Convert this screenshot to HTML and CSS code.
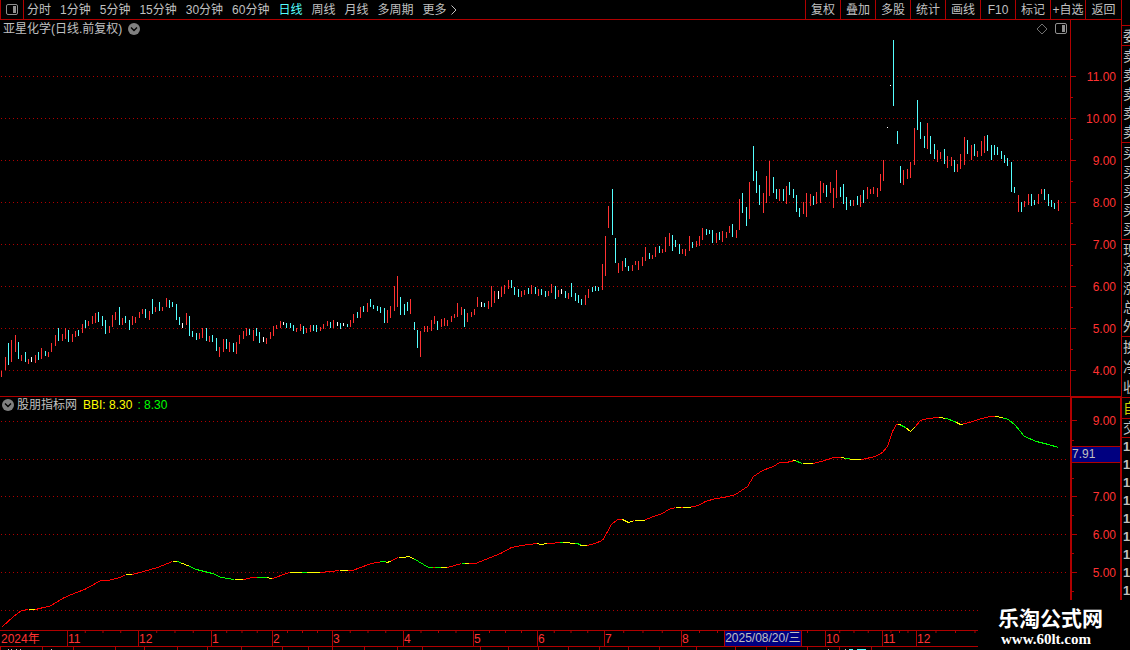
FILE: index.html
```html
<!DOCTYPE html>
<html lang="zh-CN">
<head>
<meta charset="utf-8">
<title>亚星化学 日线</title>
<link rel="stylesheet" href="styles.css">
</head>
<body>
<div class="app">
  <main class="main">
    <header class="toolbar">
      <button class="layout-btn" aria-label="布局">
        <svg width="12" height="12" viewBox="0 0 12 12"><rect x=".5" y=".5" width="11" height="10" rx="1.5" fill="none" stroke="#909090"/><rect x="7" y="2" width="3" height="7" fill="#909090"/></svg>
      </button>
      <nav class="periods">
        <button>分时</button><button>1分钟</button><button>5分钟</button><button>15分钟</button><button>30分钟</button><button>60分钟</button><button class="active">日线</button><button>周线</button><button>月线</button><button>多周期</button>
        <button class="more">更多<svg width="6" height="10" viewBox="0 0 6 10"><path d="M.5.5 5 5 .5 9.5" fill="none" stroke="#c0c0c0"/></svg></button>
      </nav>
      <div class="tools">
        <button>复权</button><button>叠加</button><button>多股</button><button>统计</button><button>画线</button><button>F10</button><button>标记</button><button>+自选</button><button>返回</button>
      </div>
    </header>

    <section class="panel price">
      <div class="plot">
        <div class="title">
          <span>亚星化学(日线.前复权)</span>
          <svg width="12" height="12" viewBox="0 0 12 12"><circle cx="6" cy="6" r="6" fill="#808080"/><path d="M3 4.5 6 7.5 9 4.5" fill="none" stroke="#000" stroke-width="1.4"/></svg>
          <span class="title-tools">
            <svg width="12" height="12" viewBox="0 0 12 12"><path d="M6 1 11 6 6 11 1 6Z" fill="none" stroke="#707070"/></svg>
            <svg width="12" height="12" viewBox="0 0 12 12"><rect x=".5" y=".5" width="11" height="10" rx="1.5" fill="none" stroke="#909090"/><rect x="7" y="2" width="3" height="7" fill="#909090"/></svg>
          </span>
        </div>
        <svg id="candles" class="chart chart-price" viewBox="0 38 1070 358" preserveAspectRatio="none"></svg>
      </div>
      <div class="axis axis-price">
        <span>11.00</span><span>10.00</span><span>9.00</span><span>8.00</span><span>7.00</span><span>6.00</span><span>5.00</span><span>4.00</span>
      </div>
    </section>

    <section class="panel bbi">
      <div class="plot">
        <div class="title title-bbi">
          <svg width="12" height="12" viewBox="0 0 12 12"><circle cx="6" cy="6" r="6" fill="#808080"/><path d="M3 4.5 6 7.5 9 4.5" fill="none" stroke="#000" stroke-width="1.4"/></svg>
          <span>股朋指标网</span><span class="yellow">BBI: 8.30</span><span class="green">: 8.30</span>
        </div>
        <svg id="bbi" class="chart chart-bbi" viewBox="0 413 1070 217" preserveAspectRatio="none"></svg>
      </div>
      <div class="axis axis-bbi">
        <span>9.00</span><span>8.00</span><span>7.00</span><span>6.00</span><span>5.00</span><span></span>
        <output class="cursor-value">7.91</output>
      </div>
    </section>

    <div class="timeline">
      <span class="first" style="flex-grow:67">2024年</span><span style="flex-grow:71">11</span><span style="flex-grow:73">12</span><span style="flex-grow:61">1</span><span style="flex-grow:60">2</span><span style="flex-grow:71">3</span><span style="flex-grow:70">4</span><span style="flex-grow:64">5</span><span style="flex-grow:67">6</span><span style="flex-grow:77">7</span><span style="flex-grow:72">8</span><span style="flex-grow:72"></span><span style="flex-grow:57">10</span><span style="flex-grow:34">11</span><span style="flex-grow:78">12</span><span class="first" style="flex-grow:127"></span>
      <time class="cursor-date" datetime="2025-08-20">2025/08/20/三</time>
    </div>
    <svg id="tabs" class="tabs" viewBox="0 647 1121 3" preserveAspectRatio="none"></svg>
  </main>

  <aside class="quote">
    <div class="group g-ratio"><span>委比</span></div>
    <div class="group g-five"><span>卖五</span><span>卖四</span><span>卖三</span><span>卖二</span><span>卖一</span></div>
    <div class="group g-five"><span>买一</span><span>买二</span><span>买三</span><span>买四</span><span>买五</span></div>
    <div class="group g-five"><span>现价</span><span>涨跌</span><span>涨幅</span><span>总量</span><span>外盘</span></div>
    <div class="group g-three"><span>换手</span><span>净资</span><span>收益</span></div>
    <div class="group g-self"><span>自选</span></div>
    <div class="group g-trade"><span>交易</span></div>
    <div class="group g-ticks"><b>1</b><b>1</b><b>1</b><b>1</b><b>1</b><b>1</b><b>1</b><b>1</b><b>1</b></div>
  </aside>

  <div class="brand"><strong>乐淘公式网</strong><span>www.60lt.com</span></div>
</div>
<script src="chart.js"></script>
</body>
</html>
```

FILE: styles.css
```css
* { box-sizing: border-box; }

:root {
  --frame: #b00000;
  --red: #ff3232;
  --text: #c0c0c0;
}

body {
  margin: 0;
  background: #000;
  color: var(--text);
  font: 12px/16px "Liberation Sans", "Noto Sans CJK SC", sans-serif;
}

button {
  margin: 0;
  padding: 0;
  border: 0;
  background: none;
  color: inherit;
  font: inherit;
  white-space: nowrap;
}

svg { display: block; flex: none; }

.app {
  position: relative;
  display: grid;
  grid-template-columns: minmax(0, 1fr) 9px;
  overflow: hidden;
}

.main { display: flex; flex-direction: column; min-width: 0; }

/* toolbar */
.toolbar {
  display: flex;
  height: 20px;
  border-bottom: 1px solid var(--frame);
  border-left: 1px solid var(--frame);
}
.layout-btn {
  display: flex;
  align-items: center;
  justify-content: center;
  width: 23px;
  border-right: 1px solid var(--frame);
}
.periods { display: flex; gap: 9px; padding-left: 3px; }
.periods .active { color: #54ffff; }
.more { display: flex; align-items: center; gap: 4px; }
.tools { display: flex; margin-left: auto; }
.tools button { width: 35px; border-left: 1px solid var(--frame); }
.tools button:last-child { width: 36px; }

/* chart panels */
.panel { display: grid; grid-template-columns: minmax(0, 1fr) 51px; }
.bbi { border-top: 1px solid var(--frame); }
.plot { min-width: 0; }
.title {
  display: flex;
  align-items: center;
  gap: 6px;
  height: 18px;
  padding: 0 3px;
}
.title-tools { display: flex; gap: 7px; margin-left: auto; }
.title-bbi { height: 16px; padding-left: 2px; gap: 3px; }
.yellow { margin-left: 3px; color: #ff0; }
.green { margin-left: 2px; color: #0f0; }
.chart { width: 100%; shape-rendering: crispEdges; }
.chart-price { height: 358px; }
.chart-bbi { height: 217px; }

.axis {
  display: flex;
  flex-direction: column;
  color: var(--red);
  text-align: right;
}
.axis span {
  display: flex;
  align-items: center;
  justify-content: flex-end;
  padding: 1px 5px 0 0;
  background:
    linear-gradient(var(--frame), var(--frame)) 0 50% / 5px 1px no-repeat,
    linear-gradient(var(--frame), var(--frame)) 0 0 / 2px 1px no-repeat;
}
.axis span:first-child {
  background: linear-gradient(var(--frame), var(--frame)) 0 50% / 5px 1px no-repeat;
}
.axis-price { border-left: 1px solid var(--frame); padding-top: 35px; }
.axis-price span { height: 42px; }
.axis-bbi {
  position: relative;
  padding: 4px 0 1px;
  border: solid var(--frame);
  border-width: 1px 1px 0 2px;
}
.axis-bbi span { flex: 1; padding-right: 4px; }
.cursor-value {
  position: absolute;
  top: 48px;
  left: 0;
  right: 0;
  height: 17px;
  border: solid var(--frame);
  border-width: 1px 0;
  background: #000080;
  color: var(--text);
  line-height: 15px;
  text-align: left;
}

/* time axis */
.timeline {
  position: relative;
  display: flex;
  height: 17px;
  border: solid var(--frame);
  border-width: 1px 0;
  color: var(--red);
}
.timeline span {
  flex: 1 1 0;
  min-width: 0;
  text-indent: 1px;
  white-space: nowrap;
  background:
    linear-gradient(var(--frame), var(--frame)) 0 0 / 1px 100% no-repeat,
    linear-gradient(90deg, var(--frame) 1px, transparent 1px) 0 0 / 25% 2px repeat-x;
}
.timeline .first { background: none; }
.cursor-date {
  position: absolute;
  top: 0;
  left: 64.6%;
  border: solid var(--frame);
  border-width: 0 1px;
  background: #000080;
  color: var(--text);
  line-height: 15px;
}
.tabs { width: 100%; height: 3px; shape-rendering: crispEdges; }

/* quote column, mostly beyond the window edge */
.quote {
  padding-top: 25px;
  border-left: 1px solid var(--frame);
  overflow: hidden;
}
.group {
  display: flex;
  flex-direction: column;
  justify-content: space-around;
  padding-left: 1px;
  border-top: 1px solid var(--frame);
  font-size: 14px;
  white-space: nowrap;
}
.g-ratio { height: 20px; }
.g-five { height: 97px; }
.g-three { height: 61px; }
.g-self { height: 21px; color: #d0d000; }
.g-trade { height: 19px; }
.g-ticks { height: 163px; font-size: 13px; }

.brand {
  position: absolute;
  right: 0;
  bottom: 0;
  display: flex;
  flex-direction: column;
  align-items: flex-start;
  width: 152px;
  height: 50px;
  padding: 7px 0 0 20px;
  background: #000;
  color: #fff;
}
.brand strong { font-size: 21px; line-height: 24px; }
.brand span {
  padding-left: 3px;
  font: bold 15px/16px "Liberation Serif", serif;
}
```

FILE: chart.js
```js
const NS = "http://www.w3.org/2000/svg";
const FRAME = "#b00000";

function add(parent, name, attrs) {
  const el = document.createElementNS(NS, name);
  for (const key in attrs) el.setAttribute(key, attrs[key]);
  parent.appendChild(el);
}

function grid(svg, rows) {
  for (const y of rows) {
    add(svg, "path", { d: `M1 ${y + 0.5}H1067`, stroke: FRAME, "stroke-dasharray": "1 3" });
  }
}

/* x, high, low, direction: r up, c down, w flat */
const BARS = `1 371 377 r,5 357 370 r,8 343 365 c,11 340 362 r,15 335 352 r,18 342 359 c,21 355 361 r,25 352 362 c,28 359 364 r,31 357 362 w,
35 355 363 r,38 352 360 c,41 348 359 r,45 351 356 c,48 352 357 r,51 343 352 r,55 335 346 r,58 328 341 c,62 334 341 r,65 328 339 r,
68 330 342 c,72 334 342 r,75 331 337 r,78 330 336 c,82 324 333 r,85 320 328 c,88 321 326 r,92 316 324 r,95 313 323 r,98 312 322 c,
102 316 326 c,105 320 334 c,109 326 333 r,112 315 327 r,115 312 320 r,119 307 325 c,122 318 325 r,125 316 323 c,129 320 330 c,132 316 325 r,
135 317 323 r,139 312 318 r,142 309 314 r,145 309 318 c,149 311 320 r,152 299 314 c,155 307 312 r,159 302 311 c,162 307 311 r,166 298 307 r,
169 300 308 c,172 302 307 c,176 304 320 c,179 317 325 c,182 323 328 w,186 313 325 r,189 316 336 c,192 331 337 c,196 333 340 c,199 333 339 r,
202 328 338 r,206 328 341 c,209 336 342 r,212 335 342 c,216 338 351 c,219 347 357 r,223 339 352 r,226 339 349 c,229 342 352 r,233 343 352 c,
236 342 354 r,239 335 344 r,243 331 339 r,246 328 336 r,249 329 335 c,253 330 341 r,256 328 336 c,259 332 343 c,263 337 342 w,266 338 344 r,
270 332 339 r,273 326 336 r,276 325 329 r,280 321 328 r,283 322 325 w,286 323 328 c,290 323 328 c,293 325 331 c,296 328 332 r,300 324 331 r,
303 326 334 c,306 328 333 r,310 325 332 r,313 325 331 c,316 325 332 c,320 327 331 r,323 324 329 r,327 321 326 r,330 322 328 c,333 320 328 r,
337 322 326 w,340 323 329 c,343 323 326 w,347 324 327 c,350 320 327 r,353 314 323 r,357 312 318 c,360 307 318 r,363 306 312 c,367 303 312 r,
370 299 307 c,373 305 309 c,377 306 311 c,380 307 313 c,384 308 323 c,387 310 323 r,390 306 318 r,394 286 311 r,397 276 307 r,400 297 315 c,
404 304 315 c,407 302 311 c,410 299 314 r,414 322 330 c,417 330 348 c,420 331 357 r,424 326 332 r,427 326 332 r,431 320 331 r,434 316 324 r,
437 321 330 c,441 319 327 r,444 318 326 r,447 320 326 r,451 316 322 r,454 314 318 r,457 303 317 r,461 307 315 r,464 309 327 c,467 313 322 r,
471 312 317 r,474 309 315 r,477 297 307 r,481 302 307 w,484 303 307 c,488 301 309 r,491 286 307 r,494 291 303 r,498 291 299 w,501 287 297 r,
504 285 294 r,508 280 289 r,511 280 288 c,514 287 295 c,518 289 297 c,521 291 297 r,524 290 295 r,528 288 294 c,531 285 294 r,535 287 294 c,
538 289 296 r,541 289 295 c,545 291 297 c,548 291 296 r,551 284 293 r,555 286 299 c,558 290 297 r,561 289 294 w,565 291 298 c,568 293 299 r,
571 283 297 c,575 293 301 c,578 295 303 c,581 299 305 c,585 295 305 r,588 289 298 r,592 287 292 c,595 286 291 c,598 287 291 c,602 264 290 r,
605 236 276 r,608 206 228 r,612 189 235 c,615 238 263 c,618 263 273 r,622 261 271 r,625 258 267 c,628 266 271 c,632 265 271 r,635 261 265 r,
638 261 270 r,642 257 266 r,645 247 261 r,649 253 259 c,652 255 259 r,655 247 257 r,659 246 253 c,662 249 253 r,665 237 252 r,669 233 246 r,
672 235 251 c,675 240 247 c,679 244 254 c,682 249 254 r,685 249 256 r,689 236 251 r,692 242 248 c,696 241 247 r,699 236 246 r,702 228 240 r,
706 229 235 c,709 230 234 c,712 230 243 c,716 233 243 r,719 232 240 c,722 231 242 r,726 232 238 r,729 226 233 r,732 224 237 c,736 230 238 r,
739 199 230 r,742 193 213 c,746 207 226 c,749 182 219 r,753 146 181 c,756 171 193 c,759 185 205 c,763 193 213 r,766 176 203 r,769 161 196 r,
773 177 193 c,776 189 199 c,779 189 201 r,783 189 201 c,786 186 204 r,789 182 195 c,793 189 198 c,796 195 212 c,799 208 217 c,803 202 214 r,
806 193 217 r,810 194 206 r,813 196 205 c,816 192 204 r,820 181 203 r,823 183 193 r,826 185 197 c,830 182 193 r,833 188 208 r,836 170 198 r,
840 187 197 c,843 184 204 c,846 197 210 c,850 200 206 c,853 200 206 r,857 196 205 c,860 195 207 r,863 190 203 c,867 187 199 r,870 189 194 r,
873 187 194 r,877 188 197 r,880 174 191 r,883 160 181 r,887 127 128 w,890 85 86 w,893 40 106 c,897 131 144 c,900 166 183 c,903 170 185 r,
907 169 179 r,910 162 178 r,914 128 165 r,917 100 130 c,920 122 139 c,924 136 148 c,927 123 149 r,930 136 154 c,934 144 159 c,937 150 162 r,
940 152 159 r,944 149 164 c,947 156 168 r,951 157 166 r,954 160 172 c,957 164 172 r,960 154 169 r,964 137 165 r,967 140 154 c,971 145 160 r,
974 144 156 c,977 151 157 r,981 141 156 r,984 136 153 r,987 135 151 c,991 145 160 c,994 145 155 c,997 147 155 c,1001 151 159 c,1004 155 163 c,
1007 158 166 c,1011 162 192 c,1014 187 193 c,1018 195 212 r,1021 202 212 c,1024 201 207 r,1028 194 205 r,1031 194 206 c,1034 200 205 c,
1038 194 204 r,1041 189 194 r,1044 189 200 c,1048 194 206 c,1051 200 207 c,1054 203 209 c,1058 200 211 r`;

const BAR_COLORS = { r: "#ff3232", c: "#54ffff", w: "#ffffff" };
const candles = document.getElementById("candles");
grid(candles, [76, 118, 160, 202, 244, 286, 328, 370]);
for (const bar of BARS.split(",")) {
  const [x, top, bottom, kind] = bar.trim().split(" ");
  add(candles, "rect", { x, y: top, width: 1, height: bottom - top, fill: BAR_COLORS[kind] });
}

/* BBI curve */
const CURVE = [[2,626],[13,616],[21,610],[28,609],[35,609],[43,607],[49,606],[62,598],[71,594],[84,589],[95,583],[100,580],[107,580],[120,577],
[125,574],[132,574],[143,571],[157,567],[172,561],[177,561],[187,565],[196,569],[212,573],[221,577],[234,579],[243,579],[252,577],[264,577],
[272,578],[289,572],[320,572],[339,570],[352,570],[368,564],[375,562],[384,561],[387,562],[398,557],[403,557],[408,556],[413,558],[428,567],
[447,567],[461,563],[475,563],[500,553],[511,547],[521,545],[537,543],[540,544],[547,543],[562,542],[577,543],[581,545],[587,545],[594,543],
[602,540],[606,533],[611,524],[617,519],[622,519],[628,522],[634,520],[643,520],[653,516],[662,513],[668,509],[675,507],[688,507],[698,505],
[705,501],[715,498],[724,497],[735,494],[741,490],[747,486],[753,476],[762,470],[773,466],[779,462],[786,462],[794,460],[802,463],[813,463],
[824,460],[833,457],[841,457],[852,459],[861,459],[875,456],[882,452],[887,446],[892,431],[896,424],[899,424],[905,427],[910,431],[914,427],
[920,420],[927,418],[939,417],[946,418],[954,421],[960,424],[969,422],[978,419],[989,416],[997,416],[1008,419],[1015,425],[1024,436],
[1036,441],[1048,444],[1058,447]];

/* colour of the curve up to the given x */
const TREND = [[28,"r"],[35,"y"],[125,"r"],[132,"y"],[172,"r"],[177,"y"],[181,"g"],[188,"y"],[234,"g"],[243,"y"],[256,"r"],[266,"g"],[272,"y"],
[289,"r"],[301,"y"],[306,"g"],[320,"y"],[339,"r"],[347,"y"],[380,"r"],[386,"g"],[391,"y"],[398,"r"],[414,"y"],[432,"g"],[434,"r"],[440,"g"],
[447,"y"],[461,"r"],[464,"g"],[468,"y"],[537,"r"],[547,"y"],[560,"r"],[563,"g"],[575,"y"],[580,"g"],[586,"y"],[622,"r"],[632,"y"],[634,"r"],
[644,"y"],[675,"r"],[680,"y"],[682,"r"],[690,"y"],[793,"r"],[795,"y"],[802,"g"],[813,"y"],[840,"r"],[845,"y"],[850,"g"],[860,"y"],[897,"r"],
[900,"y"],[906,"g"],[914,"y"],[939,"r"],[945,"y"],[956,"g"],[963,"y"],[994,"r"],[1003,"y"],[1058,"g"]];
const TREND_COLORS = { r: "#ff0000", y: "#ffff00", g: "#00ff00" };

function curveY(x) {
  const i = Math.max(1, CURVE.findIndex((p) => p[0] >= x));
  const [x0, y0] = CURVE[i - 1];
  const [x1, y1] = CURVE[i];
  return y0 + ((y1 - y0) * (x - x0)) / (x1 - x0);
}

const bbi = document.getElementById("bbi");
grid(bbi, [421, 459, 496, 534, 572, 610]);
let from = CURVE[0][0];
for (const [to, kind] of TREND) {
  const inner = CURVE.filter((p) => p[0] > from && p[0] < to);
  const points = [[from, curveY(from)], ...inner, [to, curveY(to)]];
  add(bbi, "polyline", {
    points: points.map((p) => `${p[0] + 0.5},${p[1] + 0.5}`).join(" "),
    fill: "none",
    stroke: TREND_COLORS[kind],
  });
  from = to;
}

/* top edge of the tab row under the time axis */
const tabs = document.getElementById("tabs");
for (const x of [0, 42, 73, 115, 144, 177, 207, 241, 282, 308, 332, 364, 397, 422, 480, 508, 538, 568, 599, 628, 659, 696, 735, 766, 807, 839, 871]) {
  add(tabs, "rect", { x, y: 647, width: 1, height: 3, fill: FRAME });
}
for (const [x, width] of [[8, 1], [11, 1], [16, 1], [20, 1], [51, 1], [828, 1], [845, 1]]) {
  add(tabs, "rect", { x, y: 649, width, height: 1, fill: "#c0c0c0" });
}
for (const [x, width] of [[849, 4], [857, 9]]) {
  add(tabs, "rect", { x, y: 649, width, height: 1, fill: "#54ffff" });
}
```
